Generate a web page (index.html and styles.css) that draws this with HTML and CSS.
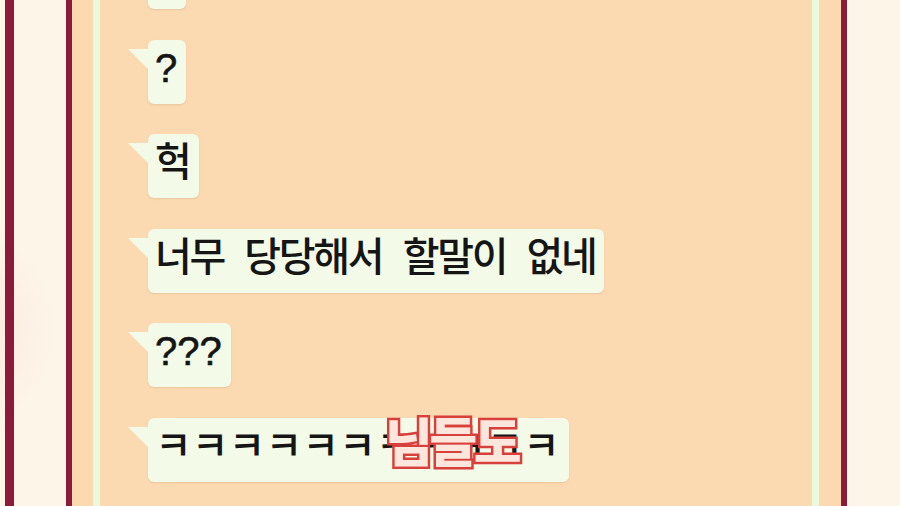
FILE: index.html
```html
<!DOCTYPE html>
<html lang="ko">
<head>
    <meta charset="UTF-8">
    <meta name="viewport" content="width=device-width, initial-scale=1.0">
    <title>대화</title>
    <link rel="stylesheet" href="styles.css">
</head>
<body>
    <div class="side"></div>
    <div class="board">
        <div class="chat">
            <div class="messages">
                <div class="bubble q">?</div>
                <div class="bubble q">?</div>
                <div class="bubble">헉</div>
                <div class="bubble">너무 당당해서 할말이 없네</div>
                <div class="bubble q">???</div>
                <div class="bubble kk">ㅋㅋㅋㅋㅋㅋㅋㅋㅋㅋㅋ<span class="caption">님들도</span></div>
            </div>
        </div>
    </div>
</body>
</html>
```

FILE: styles.css
```css
body, html {
    margin: 0;
    padding: 0;
    height: 100%;
    overflow: hidden;
}
body {
    display: flex;
    padding-left: 5px;
    box-sizing: border-box;
    background-color: #fdf6e8;
    background-image: radial-gradient(circle at -60px 330px, rgba(246, 214, 208, 0.6) 0, rgba(246, 214, 208, 0) 120px);
    font-family: "Liberation Sans", "Noto Sans CJK KR", sans-serif;
}
.side {
    width: 52px;
    flex: none;
    border-left: 9px solid #8c1a3b;
}
.board {
    width: 781px;
    flex: none;
    box-sizing: border-box;
    border-left: 6px solid #8c1a3b;
    border-right: 6px solid #8c1a3b;
    padding: 0 22px 0 21px;
    background-color: #fbdab1;
    display: flex;
}
.chat {
    flex: 1;
    border-left: 7px solid #e9fadd;
    border-right: 7px solid #e9fadd;
    overflow: hidden;
}
.messages {
    display: flex;
    flex-direction: column;
    align-items: flex-start;
    gap: 30.5px;
    margin-top: -55px;
    padding-left: 48px;
}
.bubble {
    position: relative;
    height: 64px;
    box-sizing: border-box;
    padding: 0 9px 0 7px;
    background-color: #f3fae8;
    border-radius: 6px;
    box-shadow: 0 1px 2px rgba(150, 110, 70, 0.18);
    font-size: 40px;
    font-weight: 500;
    line-height: 56px;
    letter-spacing: -2.3px;
    word-spacing: 11.5px;
    color: #151515;
    white-space: nowrap;
}
.bubble::before {
    content: "";
    position: absolute;
    left: -20px;
    top: 9px;
    border-top: 20px solid #f3fae8;
    border-left: 20px solid transparent;
}
.q {
    font-weight: 400;
    letter-spacing: 0;
    -webkit-text-stroke: 0.6px #151515;
}
.kk {
    letter-spacing: 0;
}
.caption {
    position: absolute;
    left: 237px;
    top: -8px;
    font-family: "Noto Sans CJK KR", sans-serif;
    font-size: 52px;
    font-weight: 900;
    line-height: 60px;
    letter-spacing: -3.5px;
    color: #fde6dc;
    -webkit-text-stroke: 5px #d8403c;
    paint-order: stroke fill;
}
```
